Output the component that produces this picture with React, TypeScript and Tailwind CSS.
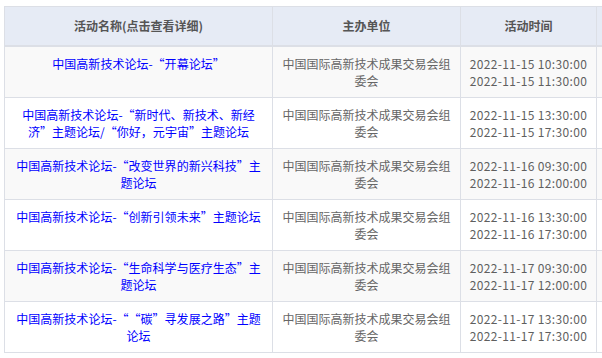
const rows = [
  {
    name: "中国高新技术论坛-“开幕论坛”",
    start: "2022-11-15 10:30:00",
    end: "2022-11-15 11:30:00",
  },
  {
    name: "中国高新技术论坛-“新时代、新技术、新经济”主题论坛/“你好，元宇宙”主题论坛",
    start: "2022-11-15 13:30:00",
    end: "2022-11-15 17:30:00",
  },
  {
    name: "中国高新技术论坛-“改变世界的新兴科技”主题论坛",
    start: "2022-11-16 09:30:00",
    end: "2022-11-16 12:00:00",
  },
  {
    name: "中国高新技术论坛-“创新引领未来”主题论坛",
    start: "2022-11-16 13:30:00",
    end: "2022-11-16 17:30:00",
  },
  {
    name: "中国高新技术论坛-“生命科学与医疗生态”主题论坛",
    start: "2022-11-17 09:30:00",
    end: "2022-11-17 12:00:00",
  },
  {
    name: "中国高新技术论坛-““碳”寻发展之路”主题论坛",
    start: "2022-11-17 13:30:00",
    end: "2022-11-17 17:30:00",
  },
];

const ORGANIZER = "中国国际高新技术成果交易会组委会";

// The CJK system font sets curly quotes full-width; give each quote a
// 12px box and keep it glued to its neighbour so lines break the same way.
function Title({ text }: { text: string }) {
  const tokens: string[][] = [];
  let pending: string[] = [];
  for (const c of Array.from(text)) {
    if (c === "“") pending.push(c);
    else if (c === "”" && tokens.length) tokens[tokens.length - 1].push(c);
    else {
      tokens.push([...pending, c]);
      pending = [];
    }
  }
  return (
    <>
      {tokens.map((t, i) =>
        t.length === 1 ? (
          t[0]
        ) : (
          <span key={i} className="whitespace-nowrap">
            {t.map((c, j) =>
              c === "“" ? (
                <span key={j} className="inline-block w-[12px] text-right">
                  “
                </span>
              ) : c === "”" ? (
                <span key={j} className="inline-block w-[12px] text-left">
                  ”
                </span>
              ) : (
                c
              )
            )}
          </span>
        )
      )}
    </>
  );
}

export default function App() {
  return (
    <div
      lang="zh-CN"
      className="w-[602px] h-[358px] overflow-hidden bg-white pt-[6px] pl-[4px]"
      style={{ fontFamily: '"Noto Sans CJK SC", "Noto Sans", sans-serif' }}
    >
      <table className="table-fixed border-collapse w-[700px] text-[12px] leading-[17px]">
        <colgroup>
          <col className="w-[268px]" />
          <col className="w-[188px]" />
          <col className="w-[136px]" />
          <col className="w-[108px]" />
        </colgroup>
        <thead>
          <tr className="bg-[#e6ebf5] h-[39px]">
            <th className="border border-[#dcdfe6] border-b-2 font-bold text-[#555] px-2 text-center align-middle">
              活动名称(点击查看详细)
            </th>
            <th className="border border-[#dcdfe6] border-b-2 font-bold text-[#555] px-2 text-center align-middle">
              主办单位
            </th>
            <th className="border border-[#dcdfe6] border-b-2 font-bold text-[#555] px-2 text-center align-middle">
              活动时间
            </th>
            <th className="border border-[#dcdfe6] border-b-2" />
          </tr>
        </thead>
        <tbody>
          {rows.map((r, i) => (
            <tr key={i} className={i % 2 === 0 ? "bg-[#f9f9f9]" : "bg-white"}>
              <td className="border border-[#dcdfe6] px-2 py-2 h-[51px] align-top text-center">
                <a href="#" className="text-[#0000ff]">
                  <Title text={r.name} />
                </a>
              </td>
              <td className="border border-[#dcdfe6] px-2 py-2 align-top text-center text-[#666]">
                {ORGANIZER}
              </td>
              <td className="border border-[#dcdfe6] px-1 py-2 align-top text-center text-[#5f5f5f] whitespace-nowrap tracking-[0.35px]">
                <div>{r.start}</div>
                <div>{r.end}</div>
              </td>
              <td className="border border-[#dcdfe6]" />
            </tr>
          ))}
        </tbody>
      </table>
    </div>
  );
}
